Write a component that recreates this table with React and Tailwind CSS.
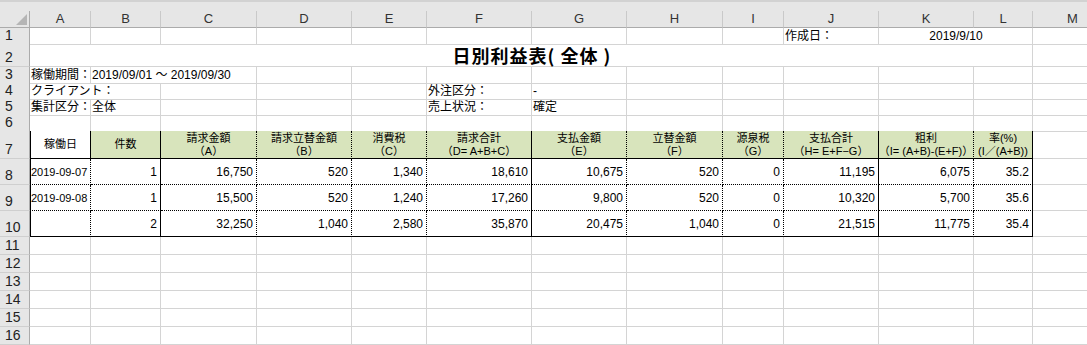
import React from "react";

const GRID =
  "grid grid-cols-[30px_61px_70px_96px_95px_75px_105px_95px_96px_61px_95px_95px_59px_80px]";
const FONT = "font-['Liberation_Sans','Noto_Sans_CJK_JP',sans-serif]";
const GRAY = "border-r border-b border-r-[#d4d4d4] border-b-[#d4d4d4]";
const LETTERS = ["A", "B", "C", "D", "E", "F", "G", "H", "I", "J", "K", "L", "M"];

// right / bottom border styles inside the report table
const RIGHT = {
  s: "border-r border-r-black",
  d: "[border-right:1px_dotted_#000]",
};
const BOTTOM = {
  s: "border-b border-b-black",
  d: "[border-bottom:1px_dotted_#000]",
};

const HEAD_RIGHT = ["s", "s", "d", "d", "d", "s", "d", "d", "d", "s", "d", "s"];
const DATA_RIGHT = ["d", "s", "d", "d", "d", "s", "d", "d", "d", "s", "d", "s"];

const headers = [
  ["稼働日"],
  ["件数"],
  ["請求金額", "（A）"],
  ["請求立替金額", "（B）"],
  ["消費税", "（C）"],
  ["請求合計", "（D= A+B+C）"],
  ["支払金額", "（E）"],
  ["立替金額", "（F）"],
  ["源泉税", "（G）"],
  ["支払合計", "（H= E+F−G）"],
  ["粗利", "（I= (A+B)-(E+F)）"],
  ["率(%)", "(I／(A+B))"],
];

const rows = [
  ["2019-09-07", "1", "16,750", "520", "1,340", "18,610", "10,675", "520", "0", "11,195", "6,075", "35.2"],
  ["2019-09-08", "1", "15,500", "520", "1,240", "17,260", "9,800", "520", "0", "10,320", "5,700", "35.6"],
  ["", "2", "32,250", "1,040", "2,580", "35,870", "20,475", "1,040", "0", "21,515", "11,775", "35.4"],
];

const RowHead = ({ n }) => (
  <div className="flex items-end pl-[5px] pb-[1px] bg-[#e6e6e6] border-r border-b border-r-[#ababab] border-b-[#cfcfcf] text-[14px] leading-[15px] text-[#222] font-['Liberation_Sans',sans-serif]">
    {n}
  </div>
);

const Empty = () => <div className={GRAY} />;

const Label = ({ children, className = "" }) => (
  <div
    className={`${GRAY} flex items-end pl-[1px] text-[12px] leading-[15px] whitespace-nowrap overflow-hidden ${className}`}
  >
    {children}
  </div>
);

export default function App() {
  return (
    <div className={`w-[1087px] h-[345px] overflow-hidden bg-white text-black ${FONT}`}>
      {/* top chrome */}
      <div className="h-[2px] bg-[#d2d2d2]" />
      <div className="h-[9px] bg-[#e6e6e6]" />

      {/* column letters */}
      <div className={`${GRID} h-[17px] bg-[#e6e6e6]`}>
        <div className="relative border-r border-b border-r-[#ababab] border-b-[#ababab]">
          <svg className="absolute right-[2px] bottom-[2px]" width="11" height="11" viewBox="0 0 11 11">
            <polygon points="11,0 11,11 0,11" fill="#b5b5b5" />
          </svg>
        </div>
        {LETTERS.map((l) => (
          <div
            key={l}
            className="flex items-end justify-center pb-[1px] border-r border-b border-r-[#c9c9c9] border-b-[#ababab] text-[13px] leading-[14px] text-[#333]"
          >
            {l}
          </div>
        ))}
      </div>

      {/* row 1 */}
      <div className={`${GRID} h-[16px]`}>
        <RowHead n="1" />
        {[...Array(9)].map((_, i) => (
          <Empty key={i} />
        ))}
        <Label>作成日：</Label>
        <Label className="col-span-2 justify-center">2019/9/10</Label>
        <Empty />
      </div>

      {/* row 2 */}
      <div className={`${GRID} h-[23px]`}>
        <RowHead n="2" />
        <div className={`${GRAY} col-span-12 flex items-end justify-center`}>
          <span className="text-[18px] leading-[21px] font-bold tracking-[1px] font-['Noto_Sans_CJK_JP',sans-serif] pl-[2px]">
            日別利益表( 全体 )
          </span>
        </div>
        <Empty />
      </div>

      {/* row 3 */}
      <div className={`${GRID} h-[16px]`}>
        <RowHead n="3" />
        <Label>稼働期間：</Label>
        <Label className="col-span-2">2019/09/01 ～ 2019/09/30</Label>
        {[...Array(10)].map((_, i) => (
          <Empty key={i} />
        ))}
      </div>

      {/* row 4 */}
      <div className={`${GRID} h-[16px]`}>
        <RowHead n="4" />
        <Label className="col-span-2">クライアント：</Label>
        <Empty />
        <Empty />
        <Empty />
        <Label>外注区分：</Label>
        <Label>-</Label>
        {[...Array(6)].map((_, i) => (
          <Empty key={i} />
        ))}
      </div>

      {/* row 5 */}
      <div className={`${GRID} h-[16px]`}>
        <RowHead n="5" />
        <Label>集計区分：</Label>
        <Label>全体</Label>
        <Empty />
        <Empty />
        <Empty />
        <Label>売上状況：</Label>
        <Label>確定</Label>
        {[...Array(6)].map((_, i) => (
          <Empty key={i} />
        ))}
      </div>

      {/* row 6 */}
      <div className={`${GRID} h-[16px]`}>
        <RowHead n="6" />
        {[...Array(12)].map((_, i) => (
          <div key={i} className="border-r border-b border-r-[#d4d4d4] border-b-black" />
        ))}
        <Empty />
      </div>

      {/* row 7: table header */}
      <div className={`${GRID} h-[28px]`}>
        <RowHead n="7" />
        {headers.map((h, i) => (
          <div
            key={i}
            className={`${RIGHT[HEAD_RIGHT[i]]} ${BOTTOM.s} ${
              i === 0 ? "border-l border-l-black bg-white" : "bg-[#d8e4bc]"
            } flex flex-col items-center justify-center text-[11px] leading-[13px] whitespace-nowrap overflow-hidden`}
          >
            {h.map((t, j) => (
              <span key={j}>{t}</span>
            ))}
          </div>
        ))}
        <Empty />
      </div>

      {/* rows 8-10: data */}
      {rows.map((r, ri) => (
        <div key={ri} className={`${GRID} h-[26px]`}>
          <RowHead n={String(8 + ri)} />
          {r.map((v, i) => (
            <div
              key={i}
              className={`${RIGHT[DATA_RIGHT[i]]} ${ri === 2 ? BOTTOM.s : BOTTOM.d} ${
                i === 0
                  ? "border-l border-l-black justify-start text-[11px]"
                  : "justify-end pr-[3px] text-[12px]"
              } flex items-center leading-[14px] whitespace-nowrap overflow-hidden`}
            >
              {v}
            </div>
          ))}
          <Empty />
        </div>
      ))}

      {/* rows 11-16 */}
      {[11, 12, 13, 14, 15, 16].map((n) => (
        <div key={n} className={`${GRID} h-[18px]`}>
          <RowHead n={String(n)} />
          {LETTERS.map((l) => (
            <Empty key={l} />
          ))}
        </div>
      ))}
    </div>
  );
}
